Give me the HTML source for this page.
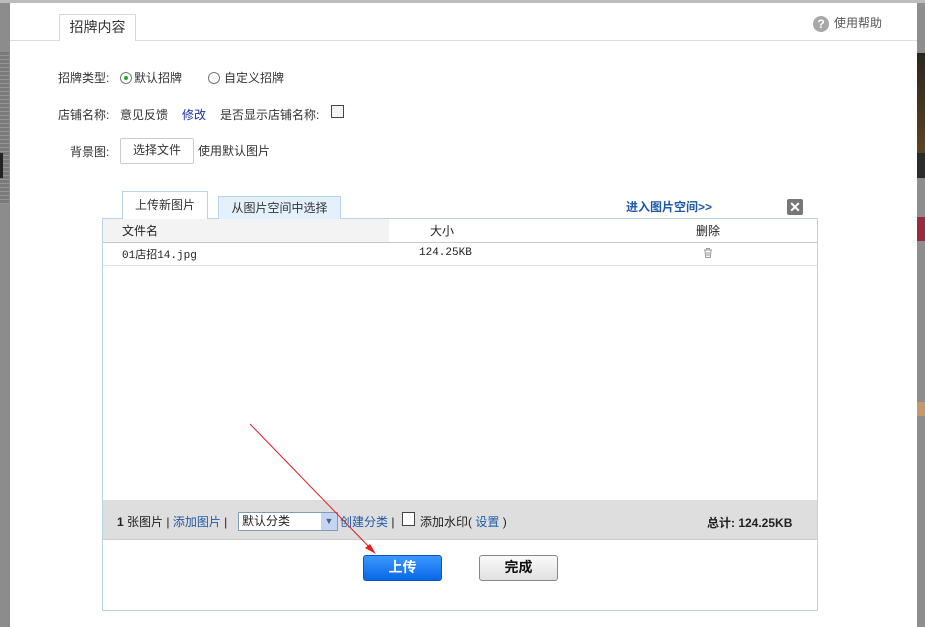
<!DOCTYPE html>
<html><head><meta charset="utf-8">
<style>
*{margin:0;padding:0;box-sizing:border-box}
body{width:925px;height:627px;position:relative;overflow:hidden;background:#fff;font-family:"Liberation Sans","Noto Sans CJK SC","WenQuanYi Zen Hei",sans-serif;font-size:12px;color:#333}
.a{position:absolute;white-space:nowrap}
.blue{color:#1f5aa8}
</style></head><body>
<div class="a" style="left:0;top:0;width:925px;height:3px;background:#bdbdbd"></div>
<div class="a" style="left:0;top:3px;width:10px;height:624px;background:#8c8c8c"></div>
<div class="a" style="left:0;top:52px;width:9px;height:152px;background:repeating-linear-gradient(#7a7a7a 0 3px,#959595 3px 4px)"></div>
<div class="a" style="left:0;top:153px;width:3px;height:25px;background:#222"></div>
<div class="a" style="left:917px;top:3px;width:8px;height:624px;background:#8e8e8e"></div>
<div class="a" style="left:917px;top:53px;width:8px;height:125px;background:linear-gradient(#2a261e,#6b4a1e)"></div>
<div class="a" style="left:917px;top:153px;width:8px;height:25px;background:#2b2b2b"></div>
<div class="a" style="left:917px;top:217px;width:8px;height:24px;background:#9b2a3e"></div>
<div class="a" style="left:917px;top:402px;width:8px;height:14px;background:#c49a6a"></div>

<div class="a" style="left:10px;top:40px;width:907px;height:1px;background:#dcdcdc"></div>
<div class="a" style="left:59px;top:14px;width:77px;height:27px;border:1px solid #d8d8d8;border-bottom:none;background:#fff;font-size:14px;color:#333;text-align:center;line-height:24px">招牌内容</div>
<div class="a" style="left:813px;top:16px;width:16px;height:16px;border-radius:50%;background:#a8a8a8;color:#fff;font-weight:bold;font-size:12px;text-align:center;line-height:16px">?</div>
<div class="a" style="left:834px;top:14px;color:#555;font-size:12px">使用帮助</div>

<div class="a" style="left:58px;top:69px">招牌类型:</div>
<div class="a" style="left:120px;top:72px;width:12px;height:12px;border:1px solid #777;border-radius:50%;background:#fff"><div style="margin:3px;width:4px;height:4px;border-radius:50%;background:#2aa52a"></div></div>
<div class="a" style="left:134px;top:69px">默认招牌</div>
<div class="a" style="left:208px;top:72px;width:12px;height:12px;border:1px solid #777;border-radius:50%;background:#fff"></div>
<div class="a" style="left:224px;top:69px">自定义招牌</div>

<div class="a" style="left:58px;top:106px">店铺名称:</div>
<div class="a" style="left:120px;top:106px">意见反馈</div>
<div class="a" style="left:182px;top:106px;color:#1a2fa0">修改</div>
<div class="a" style="left:220px;top:106px">是否显示店铺名称:</div>
<div class="a" style="left:331px;top:105px;width:13px;height:13px;border:1px solid #445;background:#f4f4f4"></div>

<div class="a" style="left:70px;top:143px">背景图:</div>
<div class="a" style="left:120px;top:138px;width:74px;height:26px;border:1px solid #ccc;border-radius:2px;background:#fff;text-align:center;line-height:23px">选择文件</div>
<div class="a" style="left:198px;top:142px">使用默认图片</div>

<div class="a" style="left:102px;top:218px;width:716px;height:393px;border:1px solid #b9d3ea;background:#fff"></div>
<div class="a" style="left:122px;top:191px;width:86px;height:29px;border:1px solid #b9d3ea;border-bottom:none;background:#fff;text-align:center;line-height:27px">上传新图片</div>
<div class="a" style="left:218px;top:196px;width:123px;height:23px;border:1px solid #b9d3ea;border-bottom:none;background:#e4f0fb;text-align:center;line-height:22px">从图片空间中选择</div>
<div class="a blue" style="left:626px;top:198px;font-weight:bold;font-size:12px">进入图片空间&gt;&gt;</div>
<div class="a" style="left:787px;top:199px;width:16px;height:16px;background:#777;border-radius:2px;color:#fff;font-weight:bold;text-align:center;line-height:16px;font-size:14px">✕</div>

<div class="a" style="left:103px;top:219px;width:286px;height:23px;background:#f3f3f3"></div>
<div class="a" style="left:103px;top:242px;width:714px;height:1px;background:#c8c8c8"></div>
<div class="a" style="left:103px;top:265px;width:714px;height:1px;background:#e2e2e2"></div>
<div class="a" style="left:122px;top:222px;color:#222">文件名</div>
<div class="a" style="left:430px;top:222px;color:#222">大小</div>
<div class="a" style="left:696px;top:222px;color:#222">删除</div>
<div class="a" style="left:122px;top:246px;font-family:'Liberation Mono','Noto Sans CJK SC',monospace;font-size:11px;color:#222">01店招14.jpg</div>
<div class="a" style="left:419px;top:247px;font-family:'Liberation Mono',monospace;font-size:11px;color:#222">124.25KB</div>
<svg class="a" style="left:702px;top:247px" width="12" height="12" viewBox="0 0 12 12"><path d="M2 3h8M4.5 3V1.5h3V3M3 3.5l.7 7h4.6l.7-7M5 5v4M7 5v4" stroke="#999" fill="none" stroke-width="1"/></svg>

<div class="a" style="left:103px;top:500px;width:714px;height:40px;background:#dedede;border-bottom:1px solid #ccc"></div>
<div class="a" style="left:117px;top:513px;color:#222"><b>1</b> 张图片 | <span class="blue">添加图片</span> |</div>
<div class="a" style="left:238px;top:512px;width:100px;height:19px;border:1px solid #7f9db9;background:#fff;padding-left:3px;line-height:17px;color:#222">默认分类</div>
<div class="a" style="left:321px;top:513px;width:16px;height:17px;background:#c5d4f0;color:#4d6185;font-size:9px;text-align:center;line-height:17px">▼</div>
<div class="a" style="left:340px;top:513px;color:#222"><span class="blue">创建分类</span> |</div>
<div class="a" style="left:402px;top:512px;width:13px;height:14px;border:1px solid #444;background:#fff"></div>
<div class="a" style="left:420px;top:513px;color:#222">添加水印( <span class="blue">设置</span> )</div>
<div class="a" style="left:707px;top:514px;color:#222;font-weight:bold">总计: 124.25KB</div>

<div class="a" style="left:363px;top:555px;width:79px;height:26px;border:1px solid #0a55c4;border-radius:3px;background:linear-gradient(#3c98ff,#0867e6);color:#fff;font-size:14px;font-weight:bold;text-align:center;line-height:23px">上传</div>
<div class="a" style="left:479px;top:555px;width:79px;height:26px;border:1px solid #888;border-radius:3px;background:linear-gradient(#fafafa,#e0e0e0);color:#111;font-size:14px;font-weight:bold;text-align:center;line-height:23px">完成</div>

<svg class="a" style="left:0;top:0" width="925" height="627"><line x1="250" y1="424" x2="372" y2="550" stroke="#e02020" stroke-width="1"/><path d="M376 554 L365 548 L370 544 Z" fill="#e02020"/></svg>
</body></html>
